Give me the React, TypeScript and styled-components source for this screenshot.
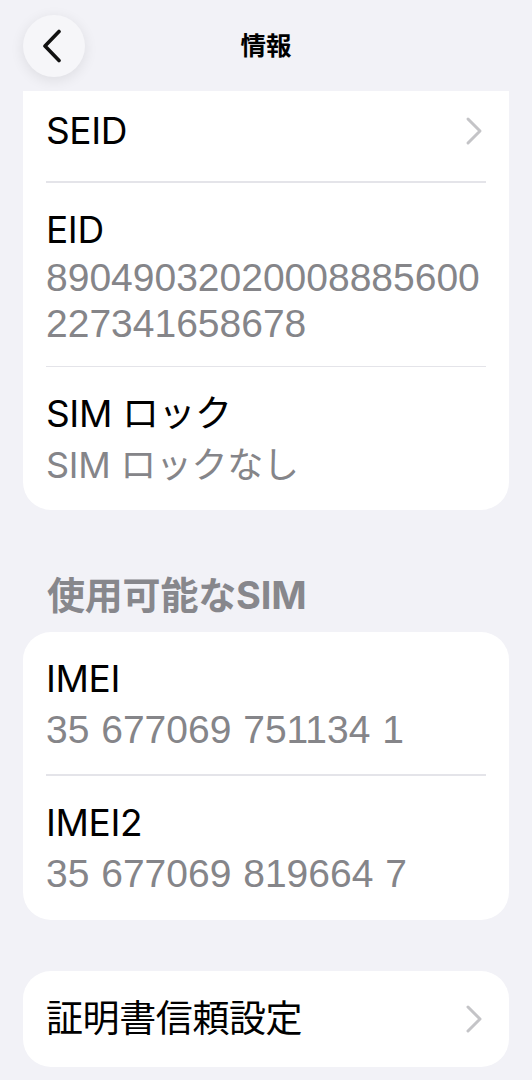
import React from "react";
import styled, { createGlobalStyle } from "styled-components";

const GlobalStyle = createGlobalStyle`
  html, body {
    margin: 0;
    padding: 0;
    background: #f2f2f7;
  }
  body {
    font-family: Inter, "Noto Sans CJK JP", "Noto Sans", sans-serif;
    -webkit-font-smoothing: antialiased;
  }
`;

const Page = styled.div`
  min-height: 100vh;
  background: #f2f2f7;
  padding: 0 23px;
  box-sizing: border-box;
`;

const Header = styled.header`
  height: 91px;
  display: grid;
  grid-template-columns: 62px 1fr 62px;
  align-items: center;
`;

const BackButton = styled.button`
  width: 62px;
  height: 62px;
  margin-top: 1px;
  border: none;
  border-radius: 50%;
  background: #f6f6f9;
  box-shadow: 0 3px 14px rgba(0, 0, 0, 0.09);
  display: flex;
  align-items: center;
  justify-content: center;
  padding: 0 4px 0 0;
`;

const Title = styled.h1`
  margin: 0;
  text-align: center;
  font-size: 25.5px;
  font-weight: 700;
  color: #000;
  line-height: 1;
`;

const Card = styled.section<{ $flatTop?: boolean }>`
  background: #fff;
  border-radius: ${(p) => (p.$flatTop ? "0 0 28px 28px" : "28px")};
  overflow: hidden;
`;

const Row = styled.div<{ $pad?: string }>`
  padding: ${(p) => p.$pad ?? "24px 23px 21px"};
`;

const LinkRow = styled.div<{ $pad?: string }>`
  padding: ${(p) => p.$pad ?? "22px 26px 22px 23px"};
  display: flex;
  align-items: center;
  justify-content: space-between;
`;

const Label = styled.div`
  font-size: 37px;
  line-height: 46px;
  color: #000;
  letter-spacing: -0.4px;
`;

const Value = styled.div<{ $gap?: number; $numeric?: boolean }>`
  margin-top: ${(p) => p.$gap ?? 5}px;
  font-family: ${(p) =>
    p.$numeric ? '"Liberation Sans", Arial, sans-serif' : "inherit"};
  font-size: ${(p) => (p.$numeric ? "39px" : "36px")};
  line-height: 46px;
  color: #858589;
  letter-spacing: ${(p) => (p.$numeric ? "0" : "-0.3px")};
  word-spacing: ${(p) => (p.$numeric ? "1px" : "0")};
  word-break: break-all;
`;

const Divider = styled.div`
  height: 1.5px;
  margin: 0 23px;
  background: #e4e4e9;
`;

const SectionTitle = styled.h2`
  margin: 62px 0 14px 24px;
  font-size: 38px;
  line-height: 46px;
  font-weight: 700;
  color: #87878c;
  letter-spacing: -0.2px;
`;

const Spacer = styled.div`
  height: 51px;
`;

const Chevron = () => (
  <svg width="18" height="30" viewBox="0 0 18 30" fill="none">
    <path
      d="M3 3 L15 15 L3 27"
      stroke="#c4c4c7"
      strokeWidth="3"
      strokeLinecap="round"
      strokeLinejoin="round"
    />
  </svg>
);

const BackIcon = () => (
  <svg width="22" height="34" viewBox="0 0 22 34" fill="none">
    <path
      d="M18 2.5 L4 17 L18 31.5"
      stroke="#111"
      strokeWidth="3.6"
      strokeLinecap="round"
      strokeLinejoin="round"
    />
  </svg>
);

export default function App() {
  return (
    <>
      <GlobalStyle />
      <Page>
        <Header>
          <BackButton aria-label="戻る">
            <BackIcon />
          </BackButton>
          <Title>情報</Title>
          <span />
        </Header>

        <Card $flatTop>
          <LinkRow $pad="17px 26px 27px 23px">
            <Label>SEID</Label>
            <Chevron />
          </LinkRow>
          <Divider />
          <Row $pad="24px 23px 19px">
            <Label>EID</Label>
            <Value $gap={2} $numeric>
              89049032020008885600227341658678
            </Value>
          </Row>
          <Divider />
          <Row $pad="24px 23px 22px">
            <Label>SIM ロック</Label>
            <Value>SIM ロックなし</Value>
          </Row>
        </Card>

        <SectionTitle>使用可能なSIM</SectionTitle>

        <Card>
          <Row>
            <Label>IMEI</Label>
            <Value $numeric>35 677069 751134 1</Value>
          </Row>
          <Divider />
          <Row $pad="24px 23px 23px">
            <Label>IMEI2</Label>
            <Value $numeric>35 677069 819664 7</Value>
          </Row>
        </Card>

        <Spacer />

        <Card>
          <LinkRow $pad="25px 26px 25px 23px">
            <Label>証明書信頼設定</Label>
            <Chevron />
          </LinkRow>
        </Card>
      </Page>
    </>
  );
}
